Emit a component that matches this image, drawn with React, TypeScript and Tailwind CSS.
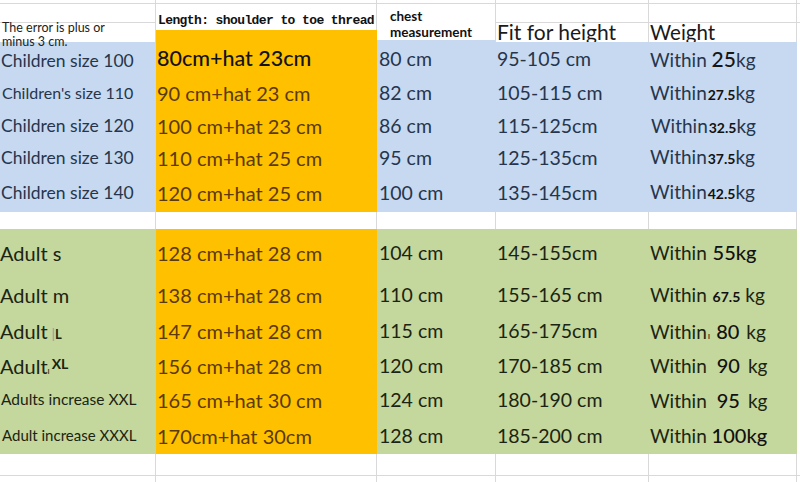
import React from "react";

const LINE = "border-[#d9d9d9]";
const BLUE = "bg-[#c6d9f0]";
const GREEN = "bg-[#c4d79d]";
const YELLOW = "bg-[#ffc000]";
const cell = "flex items-center whitespace-nowrap leading-[1.1]";

type RowData = {
  c1: React.ReactNode;
  c2: React.ReactNode;
  c3: string;
  c4: string;
  c5: React.ReactNode;
};

const children: RowData[] = [
  {
    c1: <span className="text-[17.5px] pl-[1px] mt-[3px]">Children size 100</span>,
    c2: <span className="text-[21.5px] font-medium text-[#121212]">80cm+hat 23cm</span>,
    c3: "80 cm",
    c4: "95-105 cm",
    c5: (
      <>
        Within <span className="text-[21px] font-medium text-[#161616]">25</span>kg
      </>
    ),
  },
  {
    c1: <span className="text-[16px] pl-[2px]">Children's size 110</span>,
    c2: "90 cm+hat 23 cm",
    c3: "82 cm",
    c4: "105-115 cm",
    c5: (
      <>
        Within<span className="text-[14px] font-bold text-[#111] ml-[1px]">27.5</span>kg
      </>
    ),
  },
  {
    c1: <span className="text-[17.5px] pl-[1px]">Children size 120</span>,
    c2: "100 cm+hat 23 cm",
    c3: "86 cm",
    c4: "115-125cm",
    c5: (
      <>
        <span className="ml-[1px]">Within</span>
        <span className="text-[14px] font-bold text-[#111] ml-[1px]">32.5</span>kg
      </>
    ),
  },
  {
    c1: <span className="text-[17.5px] pl-[1px]">Children size 130</span>,
    c2: "110 cm+hat 25 cm",
    c3: "95 cm",
    c4: "125-135cm",
    c5: (
      <>
        Within<span className="text-[14px] font-bold text-[#111] ml-[1px]">37.5</span>kg
      </>
    ),
  },
  {
    c1: <span className="text-[17.5px] pl-[1px]">Children size 140</span>,
    c2: "120 cm+hat 25 cm",
    c3: "100 cm",
    c4: "135-145cm",
    c5: (
      <>
        Within<span className="text-[14px] font-bold text-[#111] ml-[1px]">42.5</span>kg
      </>
    ),
  },
];

const adults: RowData[] = [
  {
    c1: <span className="text-[20px]">Adult s</span>,
    c2: "128 cm+hat 28 cm",
    c3: "104 cm",
    c4: "145-155cm",
    c5: (
      <>
        Within <span className="text-[20px] font-medium text-[#111] ml-[1px]">55kg</span>
      </>
    ),
  },
  {
    c1: <span className="text-[20px]">Adult m</span>,
    c2: "138 cm+hat 28 cm",
    c3: "110 cm",
    c4: "155-165 cm",
    c5: (
      <>
        Within <span className="text-[14px] font-bold text-[#111] ml-[1px]">67.5</span>
        <span className="ml-[5px]">kg</span>
      </>
    ),
  },
  {
    c1: (
      <span className="text-[20px]">
        Adult<span className="text-[14px] text-[#999] ml-[4px]">|</span>
        <span className="text-[13px] font-bold">L</span>
      </span>
    ),
    c2: "147 cm+hat 28 cm",
    c3: "115 cm",
    c4: "165-175cm",
    c5: (
      <>
        Within<span className="text-[10px] ml-[1px]">ı</span>
        <span className="text-[20px] font-medium text-[#111] ml-[6px]">80</span>
        <span className="ml-[7px]">kg</span>
      </>
    ),
  },
  {
    c1: (
      <span className="text-[20px]">
        Adult<span className="text-[9px]">ı</span>
        <span className="text-[14px] font-bold align-[5px] ml-[2px]">XL</span>
      </span>
    ),
    c2: "156 cm+hat 28 cm",
    c3: "120 cm",
    c4: "170-185 cm",
    c5: (
      <>
        Within
        <span className="text-[20px] font-medium text-[#111] ml-[10px]">90</span>
        <span className="ml-[8px]">kg</span>
      </>
    ),
  },
  {
    c1: <span className="text-[15.5px] pl-[1px]">Adults increase XXL</span>,
    c2: "165 cm+hat 30 cm",
    c3: "124 cm",
    c4: "180-190 cm",
    c5: (
      <>
        Within
        <span className="text-[20px] font-medium text-[#111] ml-[10px]">95</span>
        <span className="ml-[8px]">kg</span>
      </>
    ),
  },
  {
    c1: <span className="text-[15px] pl-[2px]">Adult increase XXXL</span>,
    c2: "170cm+hat 30cm",
    c3: "128 cm",
    c4: "185-200 cm",
    c5: (
      <>
        Within <span className="text-[20px] font-medium text-[#111]">100kg</span>
      </>
    ),
  },
];

function DataRow({ r, bg, text }: { r: RowData; bg: string; text: string }) {
  return (
    <>
      <div className={`${cell} ${bg} ${text}`}>{r.c1}</div>
      <div className={`${cell} ${YELLOW} text-[20px] text-[#5a3a06] pl-[1px]`}>
        <span>{r.c2}</span>
      </div>
      <div className={`${cell} ${bg} ${text} text-[19.5px] pl-[2px]`}>
        <span>{r.c3}</span>
      </div>
      <div className={`${cell} ${bg} ${text} text-[19.5px] pl-[1px]`}>
        <span>{r.c4}</span>
      </div>
      <div className={`${cell} ${bg} ${text} text-[19px] pl-[1px]`}>
        <span>{r.c5}</span>
      </div>
      <div className="bg-white"></div>
    </>
  );
}

function BlankRow({ bottom }: { bottom?: boolean }) {
  const b = bottom ? `border-b ${LINE}` : "";
  return (
    <>
      <div className={`bg-white border-r ${LINE} ${b}`}></div>
      <div className={`bg-white border-r ${LINE} ${b}`}></div>
      <div className={`bg-white border-r ${LINE} ${b}`}></div>
      <div className={`bg-white border-r ${LINE} ${b}`}></div>
      <div className={`bg-white border-r ${LINE} ${b}`}></div>
      <div className={`bg-white ${b}`}></div>
    </>
  );
}

export default function App() {
  return (
    <div className="w-[800px] h-[482px] overflow-hidden bg-white font-['Lato','Noto_Sans',sans-serif] text-[#222]">
      <div className="grid grid-cols-[156px_221px_119px_153px_148px_3px] grid-rows-[4px_19px_19px_34px_34px_32px_31px_39px_17px_47px_38px_34px_35px_34px_37px_22px_6px] h-[482px]">
        {/* r0 */}
        <BlankRow bottom />

        {/* r1 */}
        <div className={`bg-white border-r border-b ${LINE}`}></div>
        <div className="row-span-2 flex flex-col">
          <div className={`h-[26px] bg-white border-r ${LINE} flex items-end pl-[2px] pb-[1px]`}>
            <span className="font-['Liberation_Mono',monospace] font-bold text-[13px] tracking-[-0.6px] leading-[16px] text-[#111]">
              Length: shoulder to toe thread
            </span>
          </div>
          <div className={`flex-1 ${YELLOW}`}></div>
        </div>
        <div className={`row-span-2 flex flex-col bg-white border-r ${LINE}`}>
          <div className="flex-1 flex flex-col pl-[13px] pt-[4px] text-[13.5px] font-bold leading-[16px] text-[#111]">
            <span>chest</span>
            <span>measurement</span>
          </div>
          <div className={`h-[3px] ${BLUE}`}></div>
        </div>
        <div className={`bg-white border-r border-b ${LINE}`}></div>
        <div className={`bg-white border-r border-b ${LINE}`}></div>
        <div className={`bg-white border-b ${LINE}`}></div>

        {/* r2 */}
        <div className={`relative bg-white border-r ${LINE}`}>
          <div className="absolute left-[2px] top-[-2px] z-10 flex flex-col text-[12.5px] leading-[14px] text-[#222] whitespace-nowrap">
            <span>The error is plus or</span>
            <span>minus 3 cm.</span>
          </div>
        </div>
        <div className={`bg-white border-r ${LINE} flex items-end pl-[1px]`}>
          <span className="text-[21px] leading-[22px] -mb-[1px] text-[#1a1a1a]">Fit for height</span>
        </div>
        <div className={`bg-white border-r ${LINE} flex items-end pl-[1px]`}>
          <span className="text-[20.5px] leading-[22px] -mb-[1px] text-[#1a1a1a]">Weight</span>
        </div>
        <div className="bg-white"></div>

        {/* children */}
        {children.map((r, i) => (
          <DataRow key={"c" + i} r={r} bg={BLUE} text="text-[#26354c]" />
        ))}

        {/* spacer */}
        <BlankRow />

        {/* adults */}
        {adults.map((r, i) => (
          <DataRow key={"a" + i} r={r} bg={GREEN} text="text-[#1b2412]" />
        ))}

        {/* bottom */}
        <BlankRow bottom />
        <BlankRow />
      </div>
    </div>
  );
}
